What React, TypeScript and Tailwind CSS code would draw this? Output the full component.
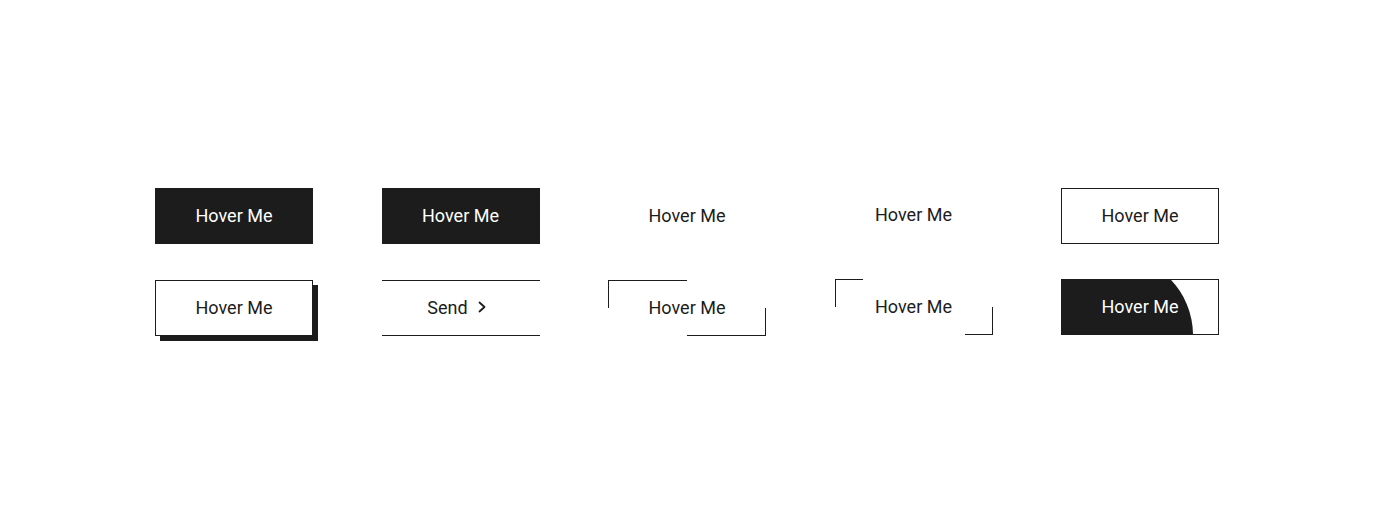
import React from "react";

const base =
  "relative h-[56px] w-[158px] pb-[2px] flex items-center justify-center text-[18px] text-[#1c1c1c] font-['Roboto',sans-serif]";

function Chevron() {
  return (
    <svg width="16" height="12" viewBox="0 0 16 12" className="ml-[10px]">
      <polyline
        points="1.5,1.5 6.5,6 1.5,10.5"
        fill="none"
        stroke="#1c1c1c"
        strokeWidth="1.8"
        strokeLinecap="round"
        strokeLinejoin="round"
      />
    </svg>
  );
}

export default function App() {
  return (
    <div className="min-h-[525px] w-full bg-white font-['Roboto',sans-serif]">
      <div className="pl-[155px] pt-[188px]">
        <div className="grid grid-cols-[repeat(5,158px)] gap-x-[68.5px] gap-y-[36px]">
          {/* row 1 */}
          <button className={`${base} bg-[#1c1c1c] text-white`}>Hover Me</button>
          <button className={`${base} bg-[#1c1c1c] text-white`}>Hover Me</button>
          <button className={base}>Hover Me</button>
          <button className={`${base} -mt-px`}>Hover Me</button>
          <button className={`${base} border border-[#1c1c1c]`}>Hover Me</button>

          {/* row 2 */}
          <button className={`${base} border border-[#1c1c1c] bg-white shadow-[5px_5px_0_#1c1c1c]`}>
            Hover Me
          </button>
          <button className={`${base} border-y border-[#1c1c1c]`}>
            <span>Send</span>
            <Chevron />
          </button>
          <button className={base}>
            <span className="absolute left-0 top-0 h-1/2 w-1/2 border-l border-t border-[#1c1c1c]" />
            <span className="absolute bottom-0 right-0 h-1/2 w-1/2 border-b border-r border-[#1c1c1c]" />
            Hover Me
          </button>
          <button className={`${base} -mt-px`}>
            <span className="absolute left-0 top-0 h-[28px] w-[28px] border-l border-t border-[#1c1c1c]" />
            <span className="absolute bottom-0 right-0 h-[28px] w-[28px] border-b border-r border-[#1c1c1c]" />
            Hover Me
          </button>
          <button className={`${base} -mt-px overflow-hidden border border-[#1c1c1c] text-white`}>
            <span className="absolute left-[-29px] top-[-25px] h-[160px] w-[160px] rounded-full bg-[#1c1c1c]" />
            <span className="relative">Hover Me</span>
          </button>
        </div>
      </div>
    </div>
  );
}
